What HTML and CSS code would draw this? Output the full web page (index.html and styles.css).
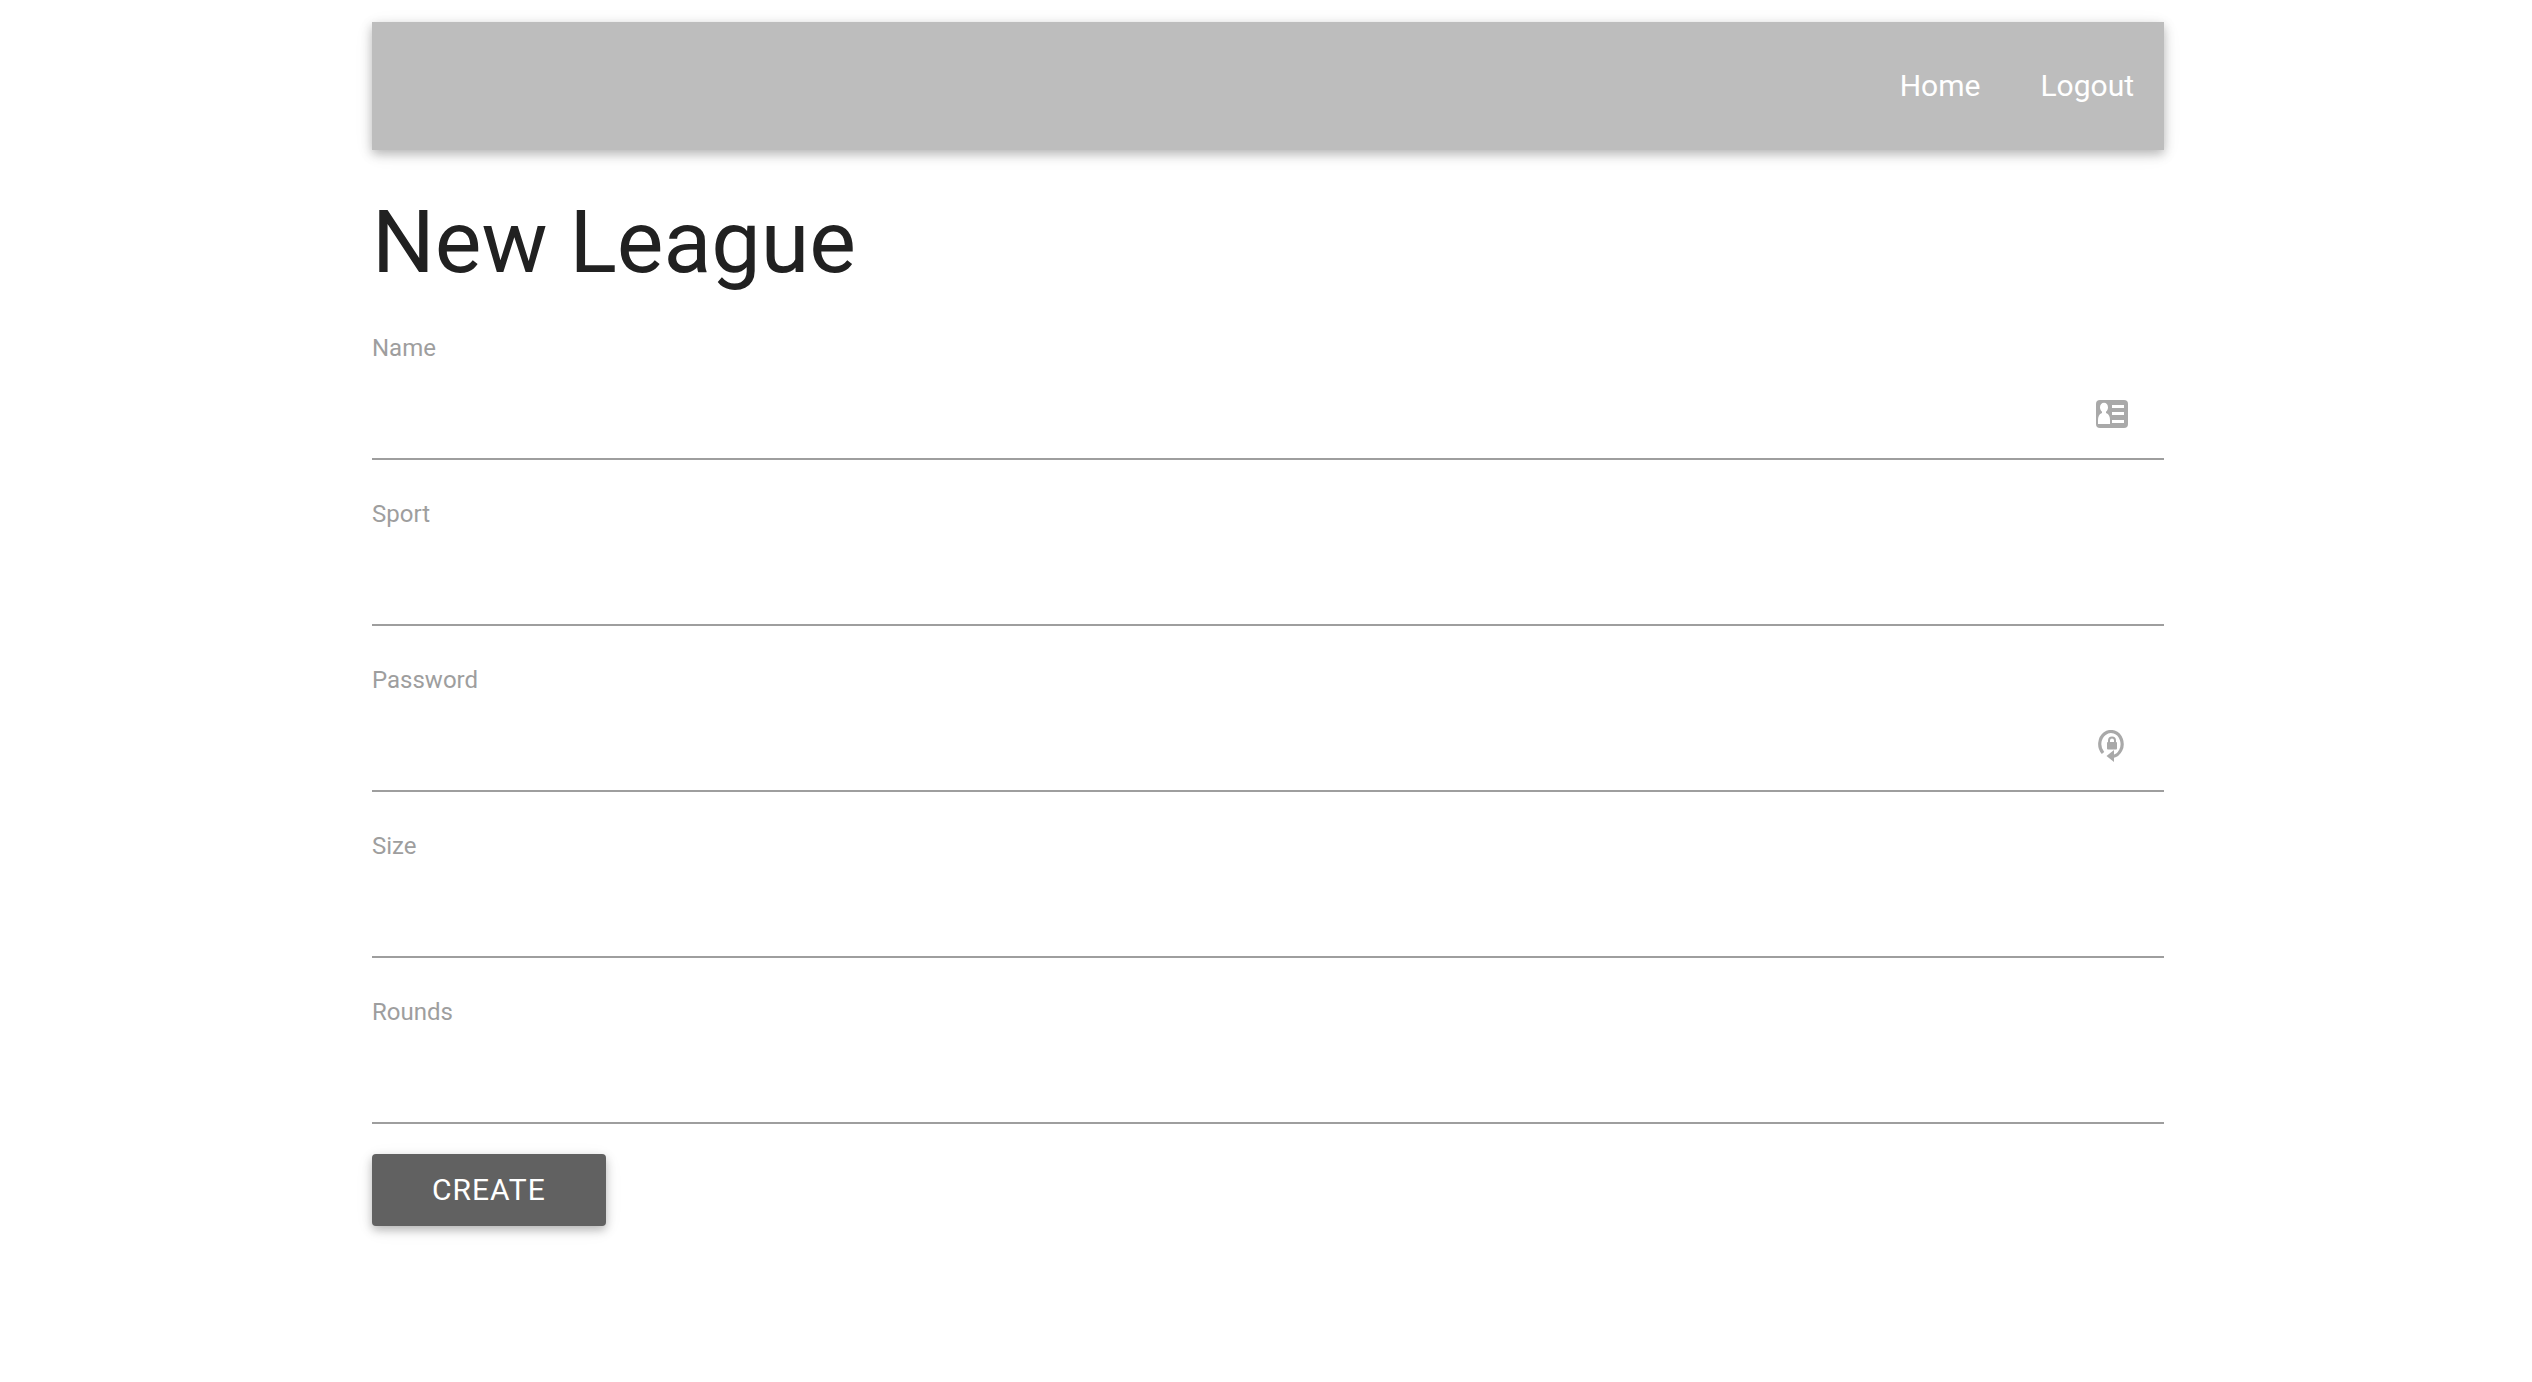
FILE: index.html
```html
<!DOCTYPE html>
<html lang="en">
<head>
  <meta charset="utf-8">
  <title>New League</title>
  <link rel="stylesheet" href="styles.css">
</head>
<body>
  <div class="container">
    <nav class="navbar">
      <a class="nav-link" href="#">Home</a>
      <a class="nav-link" href="#">Logout</a>
    </nav>
    <main>
      <h1 class="title">New League</h1>
      <form class="form">
        <div class="field">
          <label class="label" for="name">Name</label>
          <div class="control">
            <input class="input" id="name" type="text">
            <svg class="icon" viewBox="0 0 32 32" aria-hidden="true">
              <rect x="0" y="2" width="32" height="28" rx="4" fill="#a9a9a9"/>
              <ellipse cx="8" cy="9.500" rx="4" ry="4.800" fill="#fff"/>
              <path d="M6 12h4v3c3 1 4 4 4 7v4H2v-4c0-3 1-6 4-7z" fill="#fff"/>
              <path d="M16 7h12v3H16zM16 14h12v3H16zM16 22h12v3H16z" fill="#fff"/>
            </svg>
          </div>
        </div>
        <div class="field">
          <label class="label" for="sport">Sport</label>
          <div class="control">
            <input class="input" id="sport" type="text">
          </div>
        </div>
        <div class="field">
          <label class="label" for="password">Password</label>
          <div class="control">
            <input class="input" id="password" type="password">
            <svg class="icon" viewBox="0 0 32 32" aria-hidden="true">
              <path d="M7 23A11.200 12.600 0 1 1 17 26.500" fill="none" stroke="#a9a9a9" stroke-width="3.200"/>
              <path d="M10.500 26L18 20v12z" fill="#a9a9a9"/>
              <path d="M13 13v-2.500a3 3 0 0 1 6 0V13" fill="none" stroke="#a9a9a9" stroke-width="2"/>
              <rect x="11" y="12" width="10" height="7.500" rx="1" fill="#a9a9a9"/>
            </svg>
          </div>
        </div>
        <div class="field">
          <label class="label" for="size">Size</label>
          <div class="control">
            <input class="input" id="size" type="text">
          </div>
        </div>
        <div class="field">
          <label class="label" for="rounds">Rounds</label>
          <div class="control">
            <input class="input" id="rounds" type="text">
          </div>
        </div>
        <button class="button" type="button">CREATE</button>
      </form>
    </main>
  </div>
</body>
</html>
```
FILE: styles.css
```css
* {
  box-sizing: border-box;
}

body {
  margin: 0;
  padding: 22px 0 22px 4px;
  background: #fff;
  color: #212121;
  font-family: Roboto, sans-serif;
  font-size: 30px;
}

.container {
  width: 90%;
  max-width: 1792px;
  margin: 0 auto;
}

.navbar {
  display: flex;
  justify-content: flex-end;
  background: #bdbdbd;
  box-shadow: 0 4px 10px 0 rgba(0, 0, 0, 0.26), 0 4px 20px 0 rgba(0, 0, 0, 0.06);
}

.nav-link {
  padding: 0 30px;
  color: #fff;
  line-height: 128px;
  text-decoration: none;
}

.title {
  margin: 44px 0 40px;
  font-size: 88px;
  font-weight: 400;
  line-height: 96px;
}

.field {
  display: grid;
  gap: 2px;
  margin-bottom: 36px;
}

.label {
  color: #9e9e9e;
  font-size: 24px;
  line-height: 36px;
}

.control {
  position: relative;
}

.input {
  display: block;
  width: 100%;
  height: 92px;
  padding: 0 84px 0 0;
  border: 0;
  border-bottom: 2px solid #9e9e9e;
  border-radius: 0;
  outline: 0;
  background: transparent;
  color: inherit;
  font: inherit;
}

.icon {
  position: absolute;
  top: 30px;
  right: 36px;
  width: 32px;
  height: 32px;
}

.field:last-of-type {
  margin-bottom: 30px;
}

.button {
  display: block;
  height: 72px;
  padding: 0 60px;
  border: 0;
  border-radius: 4px;
  background: #616161;
  box-shadow: 0 4px 10px 0 rgba(0, 0, 0, 0.26), 0 4px 20px 0 rgba(0, 0, 0, 0.06);
  color: #fff;
  font: inherit;
  letter-spacing: 1px;
  line-height: 72px;
}
```
